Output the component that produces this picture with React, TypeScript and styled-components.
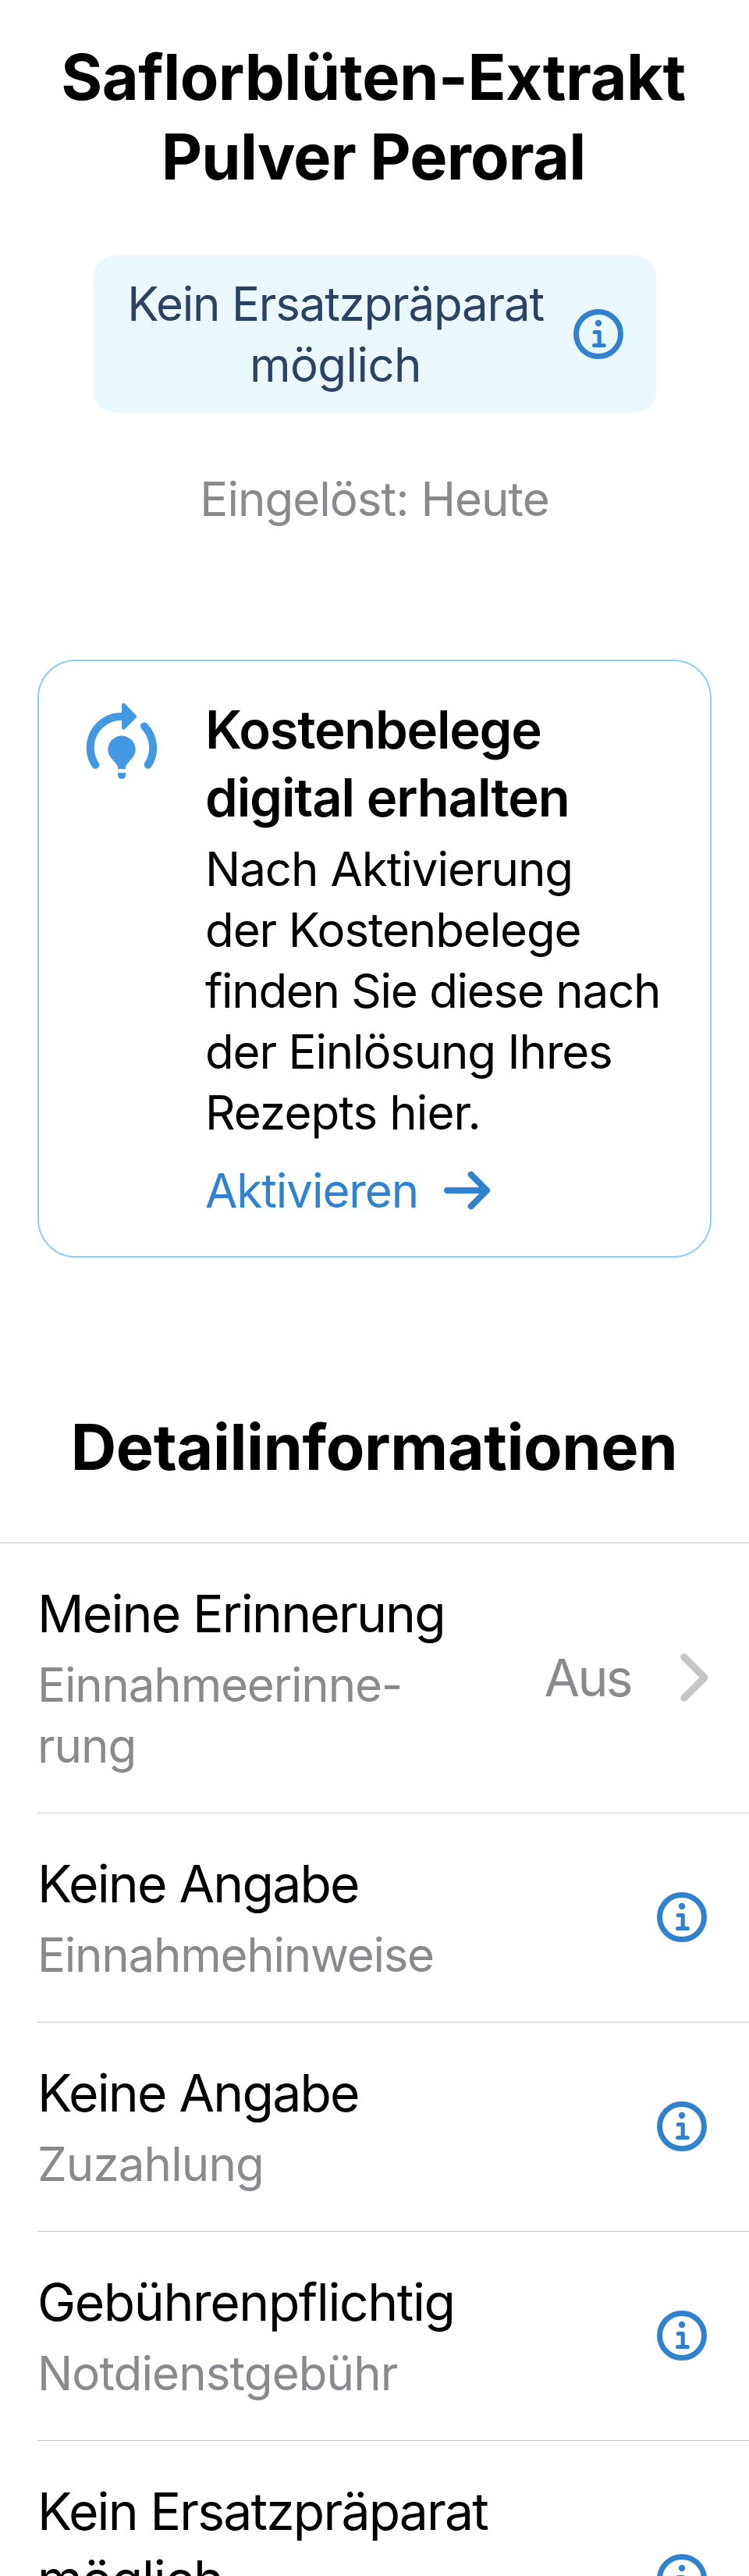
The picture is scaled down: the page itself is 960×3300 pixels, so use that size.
import React from 'react';
import styled, { createGlobalStyle } from 'styled-components';

const GlobalStyle = createGlobalStyle`
  body {
    margin: 0;
    background: #ffffff;
  }
`;

const Page = styled.main`
  display: flex;
  flex-direction: column;
  width: 960px;
  height: 3300px;
  overflow: hidden;
  box-sizing: border-box;
  padding-top: 48px;
  background: #ffffff;
  color: #000000;
  font-family: Inter, 'Liberation Sans', sans-serif;
  font-weight: 400;

  > * {
    flex-shrink: 0;
  }
`;

const Line = styled.span<{ $tracking: number }>`
  display: block;
  white-space: nowrap;
  letter-spacing: ${({ $tracking }) => $tracking}px;
`;

const Title = styled.h1`
  margin: 0;
  padding-right: 3px;
  font-size: 81px;
  line-height: 102px;
  font-weight: 700;
  text-align: center;
`;

const SectionTitle = styled.h2`
  margin: 192px 0 72px;
  padding-right: 1px;
  font-size: 81px;
  line-height: 102px;
  font-weight: 700;
  text-align: center;
`;

const Pill = styled.button`
  display: flex;
  align-items: center;
  gap: 36px;
  align-self: center;
  width: 721px;
  height: 202px;
  box-sizing: border-box;
  margin: 75px 0 0 1px;
  padding: 0 42px 0 41px;
  border: 0;
  border-radius: 28px;
  background: #ebf8ff;
  color: #2a4365;
  font: inherit;
  font-size: 60px;
  line-height: 78px;
  text-align: center;
`;

const PillLabel = styled.span`
  flex: 1;
  display: flex;
  flex-direction: column;
  align-items: center;
`;

const Status = styled.p`
  margin: 71px 0 0;
  color: #8a8a8e;
  font-size: 60px;
  line-height: 78px;
  text-align: center;
`;

const Card = styled.section`
  display: flex;
  align-items: flex-start;
  gap: 61px;
  height: 766px;
  box-sizing: border-box;
  margin: 167px 48px 0;
  padding: 44px 0 0 60px;
  border: 2px solid #90cdf4;
  border-radius: 49px;
`;

const CardIcon = styled.svg`
  flex: none;
  width: 92px;
  height: 100px;
  margin-top: 9px;
`;

const CardBody = styled.div`
  display: flex;
  flex-direction: column;
`;

const CardTitle = styled.h3`
  margin: 0;
  font-size: 67px;
  line-height: 87px;
  font-weight: 600;
`;

const CardText = styled.p`
  margin: 9px 0 22px;
  font-size: 60px;
  line-height: 78px;
`;

const CardLink = styled.a`
  display: flex;
  align-items: center;
  gap: 33px;
  color: #3182ce;
  font-size: 60px;
  line-height: 78px;
`;

const List = styled.ul`
  margin: -1px 0 0;
  padding: 0;
  list-style: none;
`;

const Row = styled.li<{ $full?: boolean; $height: number }>`
  display: flex;
  align-items: center;
  justify-content: space-between;
  box-sizing: border-box;
  height: ${({ $height }) => $height}px;
  margin-left: ${({ $full }) => ($full ? 0 : 48)}px;
  padding-left: ${({ $full }) => ($full ? 48 : 0)}px;
  padding-right: ${({ $full }) => ($full ? 52 : 54)}px;
  padding-bottom: 1px;
  border-top: 1px solid #c6c6c8;
`;

const RowText = styled.div`
  align-self: flex-start;
  padding-top: 47px;
`;

const RowTitle = styled.div`
  font-size: 66px;
  line-height: 87px;
`;

const RowCaption = styled.div`
  margin-top: 8px;
  color: #8a8a8e;
  font-size: 60px;
  line-height: 78px;
`;

const RowValue = styled.div`
  display: flex;
  align-items: center;
  gap: 63px;
  color: #8a8a8e;
  font-size: 66px;
  line-height: 87px;
`;

const Glyph = styled.svg`
  display: block;
  flex: none;
  fill: none;
  stroke-linecap: round;
  stroke-linejoin: round;
`;

const InfoIcon = () => (
  <Glyph width="64" height="64" viewBox="0 0 64 64" stroke="#3182ce">
    <circle cx="32" cy="32" r="28.5" strokeWidth="7" />
    <circle cx="32" cy="18" r="4.2" fill="#3182ce" stroke="none" />
    <path d="M27.2 29.5H33.2V46.5M26.6 46.5H39.2" strokeWidth="5.2" />
  </Glyph>
);

const ArrowIcon = () => (
  <Glyph width="60" height="50" viewBox="0 0 60 50" stroke="#3182ce" strokeWidth="8">
    <path d="M4 25H55M34.7 4.7L55 25L34.7 45.3" />
  </Glyph>
);

const ChevronIcon = () => (
  <Glyph width="36" height="62" viewBox="0 0 36 62" stroke="#c5c5c7" strokeWidth="9">
    <path d="M4.7 4.7L31 31L4.7 57.3" />
  </Glyph>
);

const IdeaCycleIcon = () => (
  <CardIcon viewBox="0 0 92 100" fill="#4299e1">
    <path
      d="M46 17.8A40 40 0 0 0 12.3 79.8M75 30.4A40 40 0 0 1 79.7 79.8"
      fill="none"
      stroke="#4299e1"
      strokeWidth="10"
      strokeLinecap="round"
    />
    <path d="M46 3a2.4 2.4 0 0 1 4.1-1.4L64.3 16.3a2.4 2.4 0 0 1 0 3.4L50.1 33.9A2.4 2.4 0 0 1 46 32.3Z" />
    <path
      d="M41 85V83.5C41 77 28.3 71.5 28.3 60.3A17.7 17.7 0 0 1 63.7 60.3C63.7 71.5 51 77 51 83.5V85Z"
    />
    <path d="M41 90H51V93A5 5 0 0 1 41 93Z" />
  </CardIcon>
);

type TextLine = [text: string, tracking: number];

const Lines = ({ items }: { items: TextLine[] }) => (
  <>
    {items.map(([text, tracking]) => (
      <Line key={text} $tracking={tracking}>
        {text}
      </Line>
    ))}
  </>
);

interface Detail {
  title: TextLine[];
  caption: TextLine[];
  height: number;
}

const details: Detail[] = [
  { title: [['Keine Angabe', -1.79]], caption: [['Einnahmehinweise', -1.25]], height: 268 },
  { title: [['Keine Angabe', -1.79]], caption: [['Zuzahlung', -0.87]], height: 268 },
  { title: [['Gebührenpflichtig', -1.44]], caption: [['Notdienstgebühr', -0.88]], height: 268 },
  { title: [['Kein Ersatzpräparat', -1.85], ['möglich', -1.26]], caption: [], height: 355 },
];

export default function App() {
  return (
    <>
      <GlobalStyle />
      <Page>
        <Title>
          <Lines items={[['Saflorblüten-Extrakt', -0.45], ['Pulver Peroral', -0.8]]} />
        </Title>

        <Pill>
          <PillLabel>
            <Lines items={[['Kein Ersatzpräparat', -1.2], ['möglich', -0.61]]} />
          </PillLabel>
          <InfoIcon />
        </Pill>

        <Status>
          <Lines items={[['Eingelöst: Heute', -0.97]]} />
        </Status>

        <Card>
          <IdeaCycleIcon />
          <CardBody>
            <CardTitle>
              <Lines items={[['Kostenbelege', -1.27], ['digital erhalten', -1.12]]} />
            </CardTitle>
            <CardText>
              <Lines
                items={[
                  ['Nach Aktivierung', -1.03],
                  ['der Kostenbelege', -1.11],
                  ['finden Sie diese nach', -1.27],
                  ['der Einlösung Ihres', -1.17],
                  ['Rezepts hier.', -0.9],
                ]}
              />
            </CardText>
            <CardLink>
              <Lines items={[['Aktivieren', -1.06]]} />
              <ArrowIcon />
            </CardLink>
          </CardBody>
        </Card>

        <SectionTitle>
          <Lines items={[['Detailinformationen', -0.41]]} />
        </SectionTitle>

        <List>
          <Row $full $height={346}>
            <RowText>
              <RowTitle>
                <Lines items={[['Meine Erinnerung', -1.85]]} />
              </RowTitle>
              <RowCaption>
                <Lines items={[['Einnahmeerinne-', -1.17], ['rung', -1.04]]} />
              </RowCaption>
            </RowText>
            <RowValue>
              <Lines items={[['Aus', -2.63]]} />
              <ChevronIcon />
            </RowValue>
          </Row>
          {details.map(({ title, caption, height }, index) => (
            <Row key={index} $height={height}>
              <RowText>
                <RowTitle>
                  <Lines items={title} />
                </RowTitle>
                {caption.length > 0 && (
                  <RowCaption>
                    <Lines items={caption} />
                  </RowCaption>
                )}
              </RowText>
              <InfoIcon />
            </Row>
          ))}
        </List>
      </Page>
    </>
  );
}
